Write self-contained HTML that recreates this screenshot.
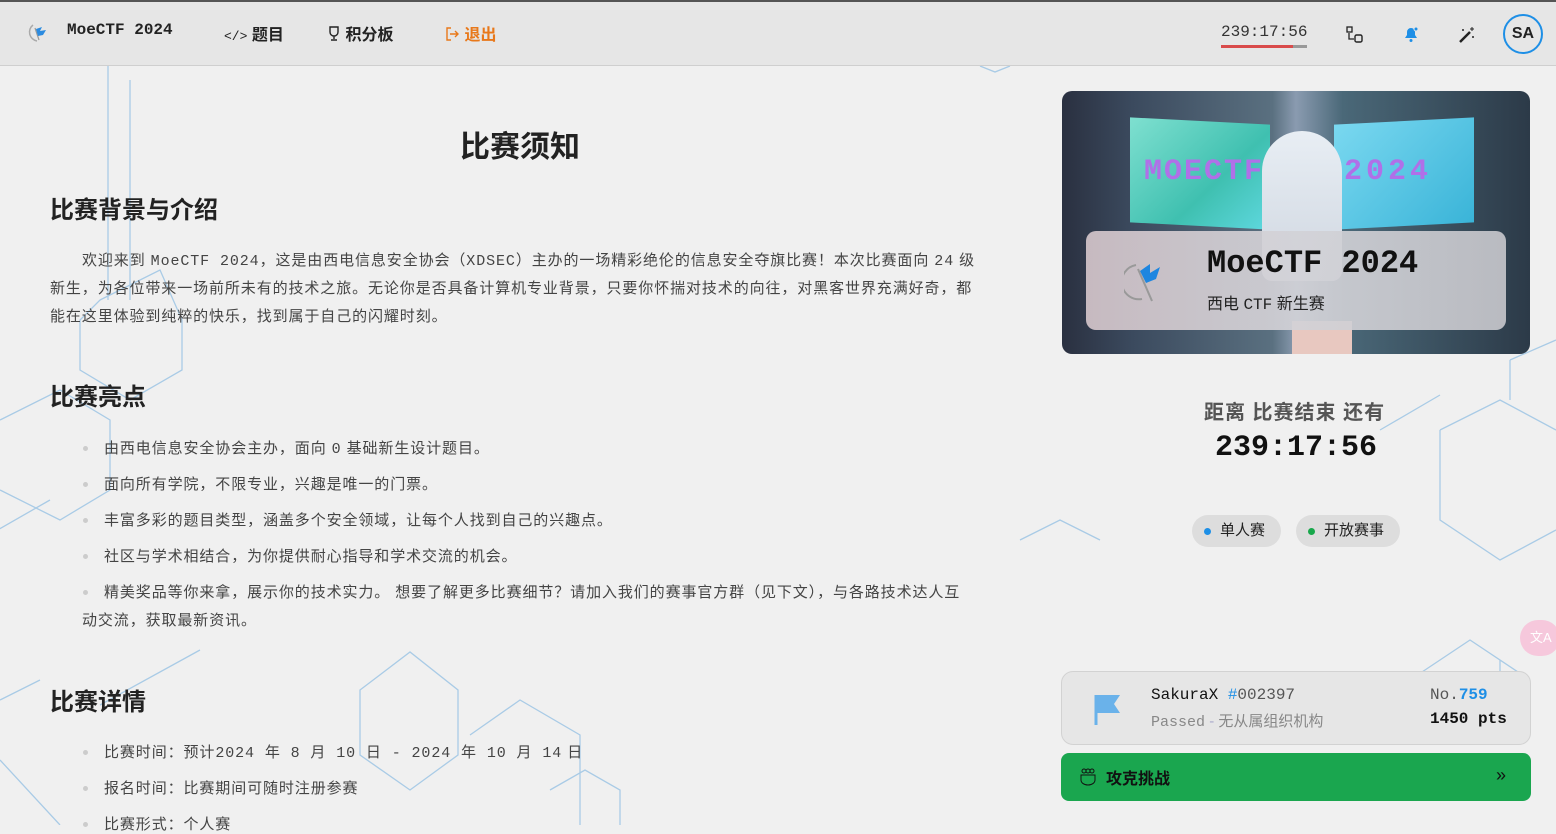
<!DOCTYPE html>
<html><head><meta charset="utf-8">
<style>
*{margin:0;padding:0;box-sizing:border-box}
body{width:1556px;height:825px;overflow:hidden;background:#f0f0f0;font-family:"Liberation Sans","Noto Sans CJK SC",sans-serif;color:#222;position:relative}
.mono{font-family:"Liberation Mono","Noto Sans CJK SC",monospace}
#bg{position:absolute;left:0;top:0}
.nav{position:absolute;left:0;top:0;width:1556px;height:66px;background:#e6e6e6;border-bottom:1px solid #cfcfcf;border-top:2px solid #555}
.nav .it{position:absolute;top:19px;font-size:16px;font-weight:bold}
h1{position:absolute;left:460px;top:122px;font-size:30px;font-weight:bold}
h2{position:absolute;left:50px;font-size:24px;font-weight:bold}
.pl{position:absolute;font-size:15px;color:#444;white-space:nowrap;letter-spacing:.9px}
.li{position:absolute;left:104px;font-size:15px;color:#444;white-space:nowrap;letter-spacing:.9px}
.li:before{content:"";position:absolute;left:-21px;top:9px;width:5px;height:5px;border-radius:50%;background:#ccc}
</style></head><body>
<svg id="bg" width="1556" height="825" fill="none" stroke="#a9cbe6" stroke-width="1.3">
<path d="M108 66V300M130 80V300M100 300L160 270L182 320V370L130 400L80 370V320Z"/>
<path d="M0 420L60 390L110 420V490L60 520L0 490M-20 540L50 500"/>
<path d="M360 690L410 652L458 690V755L410 790L360 755Z"/>
<path d="M470 735L520 700L580 735V825M550 790L585 770L620 790V825"/>
<path d="M100 705L200 650M0 700L40 680M0 760L60 825"/>
<path d="M1440 430L1500 400L1556 430M1440 430V520L1500 560L1556 530M1380 430L1440 395M1510 360L1556 340M1510 360V400"/>
<path d="M1410 680L1470 640L1530 680M1500 660V740"/>
<path d="M1020 540L1060 520L1100 540"/>
<path d="M980 66L995 72L1010 66"/>
</svg>
<div class="nav">
<svg style="position:absolute;left:28px;top:20px" width="22" height="22"><path d="M5 3A9 9 0 0 0 9 19" stroke="#aaa" stroke-width="1.5" fill="none"/><path d="M7 6L11 18" stroke="#999" stroke-width="1.2"/><path d="M8 7L14 5L12 9L18 8L15 13L10 14Z" fill="#2b8be0"/></svg>
<div class="it mono" style="left:67px;font-size:16px">MoeCTF 2024</div>
<div class="it" style="left:224px"><span class="mono" style="font-size:13px;font-weight:normal">&lt;/&gt;</span> 题目</div>
<div class="it" style="left:327px"><svg width="14" height="16" style="vertical-align:-2px"><path d="M3 1H11V6A4 4 0 0 1 3 6ZM7 10V13M4 14H10" stroke="#222" stroke-width="1.4" fill="none"/></svg> 积分板</div>
<div class="it" style="left:444px;color:#e8781a"><svg width="16" height="16" style="vertical-align:-2px"><path d="M7 2H3V14H7M6 8H14M11 5L14 8L11 11" stroke="#e8781a" stroke-width="1.4" fill="none"/></svg> 退出</div>
<div class="mono" style="position:absolute;left:1221px;top:21px;font-size:16px;color:#333">239:17:56</div>
<div style="position:absolute;left:1221px;top:43px;width:86px;height:3px;background:#999"></div>
<div style="position:absolute;left:1221px;top:43px;width:72px;height:3px;background:#d94b4b"></div>
<svg style="position:absolute;left:1346px;top:24px" width="18" height="18"><rect x="1" y="1" width="5" height="5" stroke="#222" fill="none" stroke-width="1.3"/><rect x="9" y="9" width="7" height="7" rx="1.5" stroke="#222" fill="none" stroke-width="1.4"/><path d="M3 7V13H8" stroke="#222" fill="none" stroke-width="1.3"/></svg>
<svg style="position:absolute;left:1402px;top:23px" width="18" height="18"><path d="M3 13H15L13 10V7A4 4 0 0 0 5 7V10Z" fill="#1e8fe6"/><circle cx="9" cy="15.5" r="1.5" fill="#1e8fe6"/><circle cx="14" cy="4" r="2" fill="#1e8fe6" stroke="#e6e6e6"/></svg>
<svg style="position:absolute;left:1458px;top:24px" width="18" height="18"><path d="M2 16L12 6" stroke="#222" stroke-width="2.5"/><path d="M14 1V5M12 3H16M5 3V5M4 4H6M15 10V12M14 11H16" stroke="#222"/></svg>
<div style="position:absolute;left:1503px;top:12px;width:40px;height:40px;border:2px solid #1e8fe6;border-radius:50%;text-align:center;line-height:36px;font-weight:bold;font-size:16px">SA</div>
</div>
<h1>比赛须知</h1>
<h2 style="top:190px">比赛背景与介绍</h2>
<div class="pl" style="left:82px;top:249px">欢迎来到 <span class="mono">MoeCTF 2024</span>，这是由西电信息安全协会（<span class="mono">XDSEC</span>）主办的一场精彩绝伦的信息安全夺旗比赛！本次比赛面向 <span class="mono">24</span> 级</div>
<div class="pl" style="left:50px;top:277px">新生，为各位带来一场前所未有的技术之旅。无论你是否具备计算机专业背景，只要你怀揣对技术的向往，对黑客世界充满好奇，都</div>
<div class="pl" style="left:50px;top:305px">能在这里体验到纯粹的快乐，找到属于自己的闪耀时刻。</div>
<h2 style="top:377px">比赛亮点</h2>
<div class="li" style="top:437px">由西电信息安全协会主办，面向 <span class="mono">0</span> 基础新生设计题目。</div>
<div class="li" style="top:473px">面向所有学院，不限专业，兴趣是唯一的门票。</div>
<div class="li" style="top:509px">丰富多彩的题目类型，涵盖多个安全领域，让每个人找到自己的兴趣点。</div>
<div class="li" style="top:545px">社区与学术相结合，为你提供耐心指导和学术交流的机会。</div>
<div class="li" style="top:581px">精美奖品等你来拿，展示你的技术实力。 想要了解更多比赛细节？请加入我们的赛事官方群（见下文），与各路技术达人互</div>
<div class="pl" style="left:82px;top:609px">动交流，获取最新资讯。</div>
<h2 style="top:682px">比赛详情</h2>
<div class="li" style="top:741px">比赛时间：预计<span class="mono">2024 年 8 月 10 日 - 2024 年 10 月 14</span> 日</div>
<div class="li" style="top:777px">报名时间：比赛期间可随时注册参赛</div>
<div class="li" style="top:813px">比赛形式：个人赛</div>

<div style="position:absolute;left:1062px;top:91px;width:468px;height:263px;border-radius:10px;overflow:hidden;background:linear-gradient(90deg,#2a3040 0%,#3b4a5e 15%,#5a7080 45%,#8a9bb0 50%,#4a6878 60%,#2c3a48 100%)">
<div style="position:absolute;left:68px;top:30px;width:140px;height:105px;background:linear-gradient(135deg,#7fe0d0,#3fc0b0 60%,#5fd8e0);transform:skewY(3deg)"></div>
<div style="position:absolute;left:272px;top:30px;width:140px;height:105px;background:linear-gradient(135deg,#7ad8f0,#3ab4d8);transform:skewY(-3deg)"></div>
<div class="mono" style="position:absolute;left:82px;top:64px;font-size:30px;font-weight:bold;color:#b070e8;letter-spacing:2px">MOECTF</div>
<div class="mono" style="position:absolute;left:282px;top:64px;font-size:30px;font-weight:bold;color:#b070e8;letter-spacing:4px">2024</div>
<div style="position:absolute;left:200px;top:40px;width:80px;height:150px;border-radius:40px 40px 10px 10px;background:linear-gradient(#e8eef4,#cfd6e0)"></div>
<div style="position:absolute;left:230px;top:230px;width:60px;height:33px;background:#e8c8c0"></div>
<div style="position:absolute;left:24px;top:140px;width:420px;height:99px;border-radius:10px;background:linear-gradient(90deg,rgba(215,200,205,.9),rgba(210,210,215,.92) 50%,rgba(200,200,205,.9))"></div>
<svg style="position:absolute;left:62px;top:168px" width="56" height="50"><path d="M12 6A14 14 0 0 0 18 40" stroke="#999" stroke-width="2" fill="none"/><path d="M14 10L28 42" stroke="#999" stroke-width="2"/><path d="M16 12L26 5L26 14L36 8L32 20L22 24Z" fill="#1e86e0"/></svg>
<div class="mono" style="position:absolute;left:145px;top:154px;font-size:32px;font-weight:bold;color:#111">MoeCTF 2024</div>
<div style="position:absolute;left:145px;top:199px;font-size:16px;color:#222">西电 <span class="mono">CTF</span> 新生赛</div>
</div>
<div style="position:absolute;left:1204px;top:396px;font-size:20px;font-weight:bold;color:#555;letter-spacing:1px">距离 比赛结束 还有</div>
<div class="mono" style="position:absolute;left:1215px;top:431px;font-size:30px;font-weight:bold;color:#111">239:17:56</div>
<div style="position:absolute;left:1192px;top:515px;width:89px;height:32px;border-radius:16px;background:#ddd;font-size:15px;line-height:32px;padding-left:28px">单人赛<span style="position:absolute;left:12px;top:13px;width:7px;height:7px;border-radius:50%;background:#1e8fe6"></span></div>
<div style="position:absolute;left:1296px;top:515px;width:104px;height:32px;border-radius:16px;background:#ddd;font-size:15px;line-height:32px;padding-left:28px">开放赛事<span style="position:absolute;left:12px;top:13px;width:7px;height:7px;border-radius:50%;background:#18a84b"></span></div>
<div style="position:absolute;left:1520px;top:620px;width:40px;height:36px;border-radius:18px;background:#f6c8dc;color:#fff;font-size:13px;line-height:36px;padding-left:10px">文A</div>
<div style="position:absolute;left:1061px;top:671px;width:470px;height:74px;border:1px solid #d2d2d2;border-radius:12px;background:#e6e6e6">
<svg style="position:absolute;left:32px;top:22px" width="28" height="32"><path d="M2 1V31" stroke="#6ab2ea" stroke-width="3"/><path d="M3 1H26L20 10L26 19H3Z" fill="#6ab2ea"/></svg>
<div class="mono" style="position:absolute;left:89px;top:14px;font-size:16px;color:#111">SakuraX <span style="color:#1e8fe6">#</span><span style="color:#555">002397</span></div>
<div style="position:absolute;left:89px;top:38px;font-size:15px;color:#888"><span class="mono">Passed</span> <span style="color:#aac">-</span> 无从属组织机构</div>
<div class="mono" style="position:absolute;left:368px;top:14px;font-size:16px;color:#555">No.<span style="color:#1e8fe6;font-weight:bold">759</span></div>
<div class="mono" style="position:absolute;left:368px;top:38px;font-size:16px;font-weight:bold;color:#111">1450 pts</div>
</div>
<div style="position:absolute;left:1061px;top:753px;width:470px;height:48px;border-radius:8px;background:#1aa64f">
<svg style="position:absolute;left:18px;top:15px" width="18" height="18"><circle cx="5" cy="3" r="2" stroke="#111" fill="none"/><circle cx="9" cy="3" r="2" stroke="#111" fill="none"/><circle cx="13" cy="3" r="2" stroke="#111" fill="none"/><path d="M2 7H16V12A7 5 0 0 1 2 12Z" stroke="#111" fill="none"/></svg>
<div style="position:absolute;left:45px;top:12px;font-size:16px;font-weight:bold;color:#111">攻克挑战</div>
<div style="position:absolute;left:435px;top:12px;font-size:18px;color:#111">»</div>
</div>
</body></html>
